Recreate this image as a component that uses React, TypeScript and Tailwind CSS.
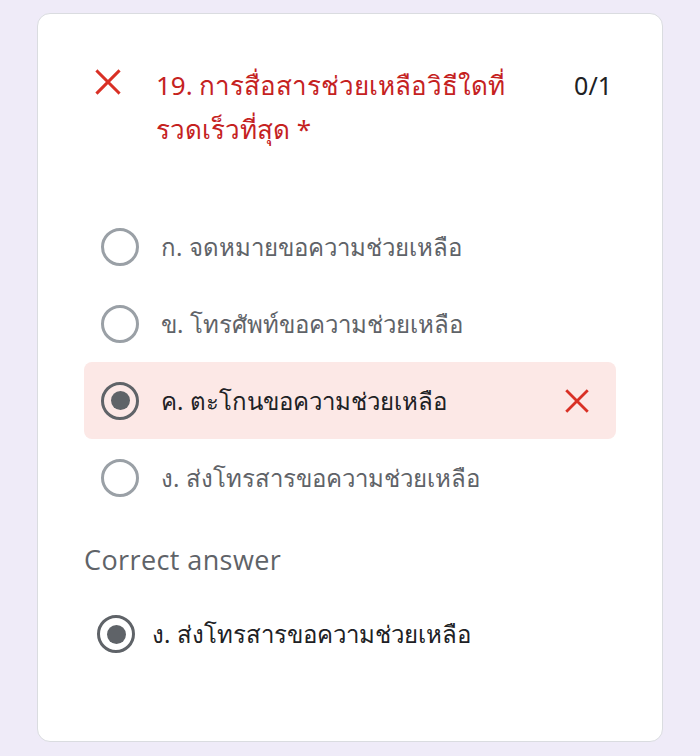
import React from 'react';

const OPTIONS = [
  { label: 'ก. จดหมายขอความช่วยเหลือ', selected: false },
  { label: 'ข. โทรศัพท์ขอความช่วยเหลือ', selected: false },
  { label: 'ค. ตะโกนขอความช่วยเหลือ', selected: true },
  { label: 'ง. ส่งโทรสารขอความช่วยเหลือ', selected: false },
];

const FONT = { fontFamily: '"Noto Sans", Roboto, "Liberation Sans", sans-serif' };

const Cross: React.FC<{ size?: number }> = ({ size = 28 }) => (
  <svg width={size} height={size} viewBox="0 0 24 24" fill="none">
    <path d="M3 3 L21 21 M21 3 L3 21" stroke="#d93025" strokeWidth="2.6" strokeLinecap="square" />
  </svg>
);

const Radio: React.FC<{ checked: boolean }> = ({ checked }) => (
  <div
    className={`w-[38px] h-[38px] shrink-0 rounded-full border-[3px] flex items-center justify-center ${
      checked ? 'border-[#5f6368]' : 'border-[#9aa0a6]'
    }`}
  >
    {checked && <div className="w-[19px] h-[19px] rounded-full bg-[#5f6368]" />}
  </div>
);

export default function App() {
  return (
    <div className="min-h-[756px] bg-[#efebf8] pt-[13px] px-[37px] pb-[14px]" style={FONT}>
      <div className="bg-white border border-[#dadce0] rounded-[13px] h-[729px] pt-[49px] px-[46px]">
        {/* Question header */}
        <div className="flex items-start pl-[10px] pr-[4px]">
          <div className="pt-[5px] w-[62px] shrink-0">
            <Cross size={28} />
          </div>
          <div className="flex-1 text-[26px] leading-[44px] text-[#c5221f] pr-6">
            19. การสื่อสารช่วยเหลือวิธีใดที่รวดเร็วที่สุด *
          </div>
          <div className="text-[25px] leading-[44px] text-[#202124]">0/1</div>
        </div>

        {/* Options */}
        <div className="mt-[57px] flex flex-col">
          {OPTIONS.map((opt) => (
            <div
              key={opt.label}
              className={`flex items-center h-[77px] pl-[17px] pr-[26px] rounded-[8px] ${
                opt.selected ? 'bg-[#fce8e6]' : ''
              }`}
            >
              <Radio checked={opt.selected} />
              <span
                className={`ml-[22px] flex-1 text-[24px] ${
                  opt.selected ? 'text-[#202124]' : 'text-[#5f6368]'
                }`}
              >
                {opt.label}
              </span>
              {opt.selected && <Cross size={26} />}
            </div>
          ))}
        </div>

        {/* Correct answer */}
        <div
          className="mt-[27px] text-[27px] leading-[34px] text-[#5f6368] font-normal tracking-[0.4px]"
          style={{ fontFamily: '"Open Sans", Roboto, sans-serif' }}
        >
          Correct answer
        </div>
        <div className="mt-[38px] flex items-center pl-[13px]">
          <Radio checked />
          <span className="ml-[17px] text-[24px] text-[#202124]">ง. ส่งโทรสารขอความช่วยเหลือ</span>
        </div>
      </div>
    </div>
  );
}
